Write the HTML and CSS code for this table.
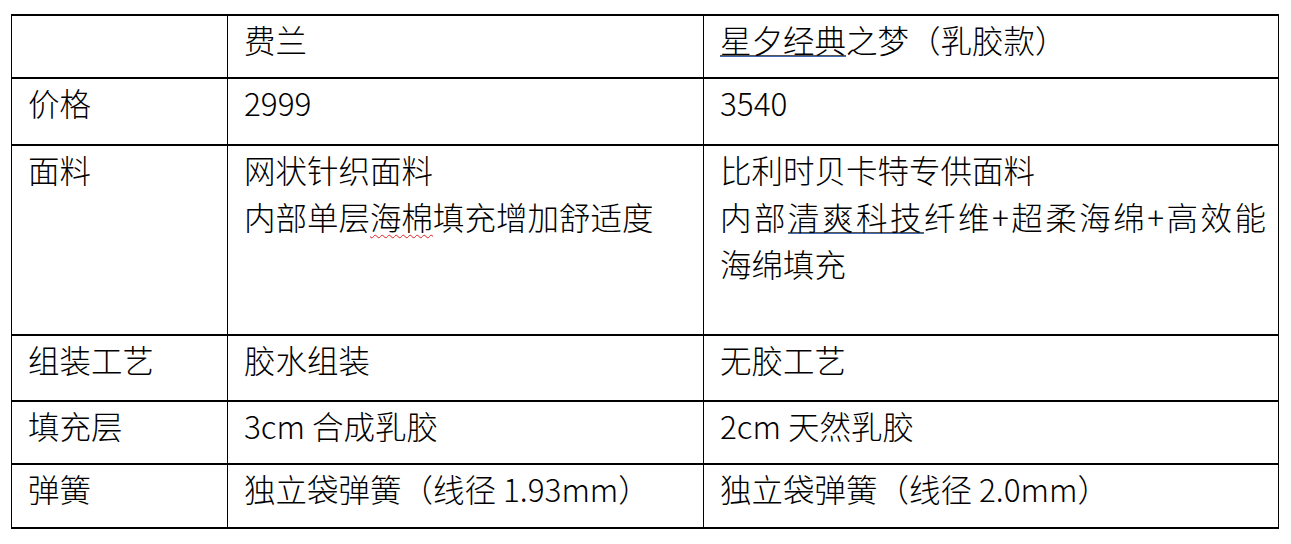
FILE: index.html
```html
<!DOCTYPE html>
<html lang="zh-CN">
<head>
<meta charset="utf-8">
<title>床垫对比</title>
<link rel="stylesheet" href="styles.css">
</head>
<body>
<div class="sheet">
  <div class="grid">
    <div class="cell r1"></div>
    <div class="cell r1">费兰</div>
    <div class="cell r1"><span class="gram">星夕经典</span>之梦（乳胶款）</div>

    <div class="cell r2">价格</div>
    <div class="cell r2">2999</div>
    <div class="cell r2">3540</div>

    <div class="cell r3">面料</div>
    <div class="cell r3">
      <div class="line">网状针织面料</div>
      <div class="line">内部单层<span class="spell">海棉</span>填充增加舒适度</div>
    </div>
    <div class="cell r3">
      <div class="line">比利时贝卡特专供面料</div>
      <div class="line wrapped">内部<span class="gram">清爽科技</span>纤维+超柔海绵+高效能</div>
      <div class="line">海绵填充</div>
    </div>

    <div class="cell r4">组装工艺</div>
    <div class="cell r4">胶水组装</div>
    <div class="cell r4">无胶工艺</div>

    <div class="cell r5">填充层</div>
    <div class="cell r5">3cm 合成乳胶</div>
    <div class="cell r5">2cm 天然乳胶</div>

    <div class="cell r6">弹簧</div>
    <div class="cell r6">独立袋弹簧（线径 1.93mm）</div>
    <div class="cell r6">独立袋弹簧（线径 2.0mm）</div>
  </div>
</div>
</body>
</html>
```

FILE: styles.css
```css
html, body {
  margin: 0;
  padding: 0;
  background: #ffffff;
}

.sheet {
  padding: 14px 0 0 11px;
}

.grid {
  display: grid;
  grid-template-columns: 216px 476px 575px;
  grid-template-rows: 63px 67px 190px 66px 63px 64px;
  width: max-content;
  border-right: 1px solid #000;
  border-bottom: 2px solid #000;
  font-family: "Noto Sans CJK SC", "Noto Sans", sans-serif;
  font-weight: 300;
  font-size: 31.5px;
  line-height: 47px;
  color: #000;
}

.cell {
  box-sizing: border-box;
  border-top: 2px solid #000;
  border-left: 1px solid #000;
  padding: 0 12px 0 16px;
  white-space: nowrap;
}

.line {
  display: block;
}

.wrapped {
  text-align: justify;
  text-align-last: justify;
  text-justify: inter-character;
}

.gram {
  text-decoration-line: underline;
  text-decoration-style: solid;
  text-decoration-color: #555555;
  text-decoration-thickness: 1px;
  text-underline-offset: 2px;
  background-image: linear-gradient(#3f67b3, #3f67b3);
  background-repeat: no-repeat;
  background-size: 100% 1px;
  background-position: 0 calc(100% - 5px);
}

.spell {
  text-decoration-line: underline;
  text-decoration-style: wavy;
  text-decoration-color: #e02020;
  text-decoration-thickness: 1px;
  text-underline-offset: 4px;
}
```
